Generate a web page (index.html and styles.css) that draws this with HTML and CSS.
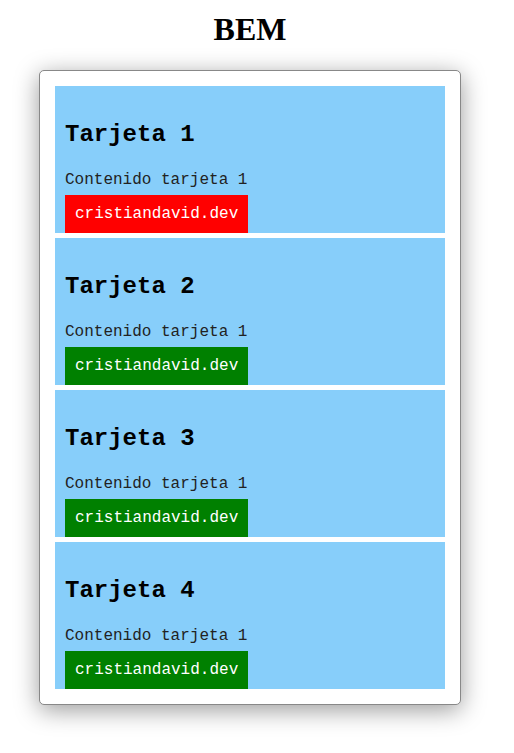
FILE: index.html
```html
<!DOCTYPE html>
<html lang="es">
<head>
<meta charset="utf-8">
<title>BEM</title>
<link rel="stylesheet" href="styles.css">
</head>
<body>
<div class="page">
  <h1 class="page__title">BEM</h1>
  <div class="container">
    <div class="card">
      <h2 class="card__title">Tarjeta 1</h2>
      <p class="card__content">Contenido tarjeta 1</p>
      <a class="card__link card__link--red" href="#">cristiandavid.dev</a>
    </div>
    <div class="card">
      <h2 class="card__title">Tarjeta 2</h2>
      <p class="card__content">Contenido tarjeta 1</p>
      <a class="card__link" href="#">cristiandavid.dev</a>
    </div>
    <div class="card">
      <h2 class="card__title">Tarjeta 3</h2>
      <p class="card__content">Contenido tarjeta 1</p>
      <a class="card__link" href="#">cristiandavid.dev</a>
    </div>
    <div class="card">
      <h2 class="card__title">Tarjeta 4</h2>
      <p class="card__content">Contenido tarjeta 1</p>
      <a class="card__link" href="#">cristiandavid.dev</a>
    </div>
  </div>
</div>
</body>
</html>
```
FILE: styles.css
```css
html, body {
  margin: 0;
  padding: 0;
  background: #fff;
}
.page {
  width: 500px;
  padding: 11px 0 48px;
  font-family: "Liberation Serif", serif;
}
.page__title {
  margin: 0 0 22px;
  text-align: center;
  font-size: 32px;
  font-weight: bold;
}
.container {
  width: 390px;
  margin: 0 0 0 39px;
  padding: 15px;
  border: 1px solid #888;
  border-radius: 5px;
  box-shadow: 0 5px 25px rgba(0, 0, 0, 0.4);
  display: flex;
  flex-direction: column;
  gap: 5px;
  background: #fff;
}
.card {
  background: #87cefa;
  padding: 15px 10px 0;
  font-family: "Liberation Mono", monospace;
  color: #000;
}
.card__title {
  margin: 20px 0 23px;
  font-size: 24px;
  font-weight: bold;
}
.card__content {
  margin: 0 0 6px;
  font-size: 16px;
  color: #222;
}
.card__link {
  display: inline-block;
  vertical-align: top;
  padding: 10px;
  font-size: 16px;
  color: #fff;
  text-decoration: none;
  background: #008000;
}
.card__link--red {
  background: #ff0000;
}
```
